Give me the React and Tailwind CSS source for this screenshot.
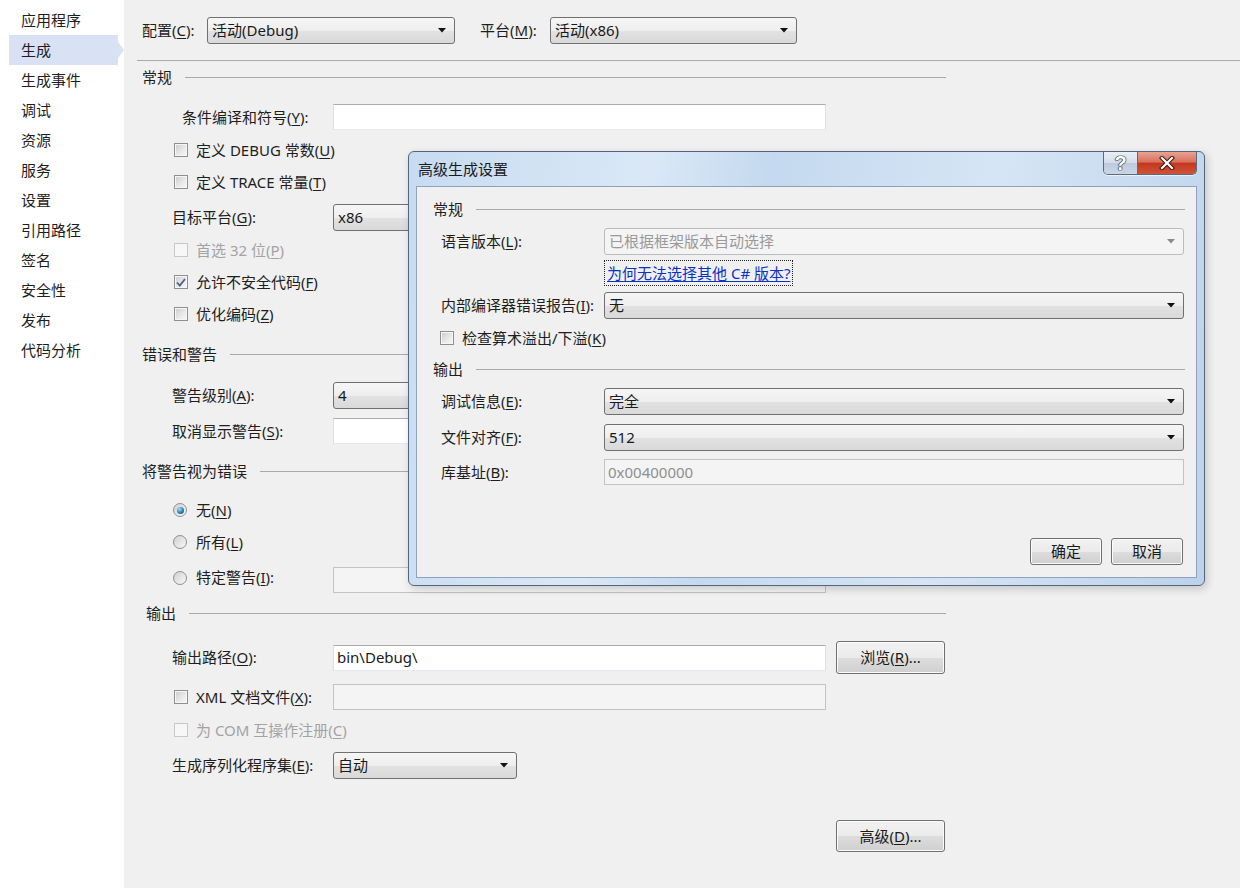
import React from 'react';

const U = ({ children }) => (
  <span className="underline underline-offset-[2px] decoration-1">{children}</span>
);

function Arrow({ disabled }) {
  return (
    <svg width="8" height="5" viewBox="0 0 8 5" className="shrink-0">
      <path d="M0 0H8L4 4.5Z" fill={disabled ? '#8a8a8a' : '#111'} />
    </svg>
  );
}

function Select({ value, className = '', disabled }) {
  return (
    <div
      className={`h-[27px] flex items-center justify-between pl-[4px] pr-[8px] rounded-[3px] border ${
        disabled
          ? 'border-[#b9bcc0] bg-[#f4f4f4] text-[#9a9a9a]'
          : 'border-[#707070] bg-[linear-gradient(to_bottom,#f6f6f6_0%,#eeeeee_50%,#e2e2e2_51%,#d9d9d9_100%)] text-[#1a1a1a]'
      } ${className}`}
    >
      <span>{value}</span>
      <Arrow disabled={disabled} />
    </div>
  );
}

function Input({ value, className = '', disabled }) {
  return (
    <div
      className={`h-[26px] flex items-center pl-[3px] border ${
        disabled
          ? 'border-[#c3c3c3] bg-[#f4f4f4] text-[#8f8f8f]'
          : 'border-[#abadb3] border-l-[#dbdfe6] border-r-[#dbdfe6] border-b-[#e3e9ef] bg-white text-[#1a1a1a]'
      } ${className}`}
    >
      {value}
    </div>
  );
}

function Button({ children, className = '' }) {
  return (
    <div
      className={`flex items-center justify-center rounded-[3px] border border-[#707070] bg-[linear-gradient(to_bottom,#f2f2f2_0%,#ebebeb_50%,#dddddd_51%,#cfcfcf_100%)] shadow-[inset_0_0_0_1px_#fbfbfb] text-[#1a1a1a] ${className}`}
    >
      {children}
    </div>
  );
}

function Check({ checked, disabled }) {
  return (
    <span
      className={`w-[14px] h-[14px] shrink-0 border flex items-center justify-center ${
        disabled
          ? 'border-[#c8c8c8] bg-[#f7f7f7]'
          : 'border-[#8e8f8f] bg-[linear-gradient(135deg,#cbcbcb_0%,#e8e8e8_55%,#f8f8f8_100%)] shadow-[inset_0_0_0_1px_#f6f6f6]'
      }`}
    >
      {checked && (
        <svg width="10" height="9" viewBox="0 0 10 9">
          <path d="M1 4.5L3.8 7.6L9 1" fill="none" stroke="#4a5f8d" strokeWidth="1.8" />
        </svg>
      )}
    </span>
  );
}

function Radio({ checked }) {
  return (
    <span className="w-[14px] h-[14px] shrink-0 rounded-full border border-[#8e8f8f] bg-[linear-gradient(135deg,#d0d0d0,#f8f8f8)] flex items-center justify-center">
      {checked && (
        <span className="w-[7px] h-[7px] rounded-full bg-[radial-gradient(circle_at_35%_30%,#a6defa_0%,#2a7fbc_55%,#0b4674_100%)]" />
      )}
    </span>
  );
}

function Section({ title, className = '' }) {
  return (
    <div className={`h-[26px] flex items-center ${className}`}>
      <span>{title}</span>
      <span className="flex-1 ml-[13px] h-0 border-t border-[#a9a9a9]" />
    </div>
  );
}

const sideItems = ['应用程序', '生成', '生成事件', '调试', '资源', '服务', '设置', '引用路径', '签名', '安全性', '发布', '代码分析'];

export default function App() {
  return (
    <div className="relative w-[1240px] h-[888px] overflow-hidden flex text-[15px] text-[#1e1e1e] font-['Noto_Sans','Noto_Sans_CJK_SC',sans-serif]">
      {/* Sidebar */}
      <div className="w-[124px] shrink-0 bg-white pt-[5px] flex flex-col">
        {sideItems.map((t) =>
          t === '生成' ? (
            <div key={t} className="h-[30px] flex items-center">
              <div className="ml-[9px] w-[109px] h-[30px] bg-[#d9e2f4] flex items-center pl-[12px]">{t}</div>
              <div className="w-0 h-0 border-y-[8px] border-y-transparent border-l-[6px] border-l-[#d9e2f4]" />
            </div>
          ) : (
            <div key={t} className="h-[30px] flex items-center pl-[21px]">
              {t}
            </div>
          )
        )}
      </div>

      {/* Main */}
      <div className="flex-1 bg-[#f0f0f0] flex flex-col">
        <div className="h-[60px] flex items-start pt-[17px] pl-[18px]">
          <span className="w-[65px] h-[27px] flex items-center">
            配置(<U>C</U>):
          </span>
          <Select value="活动(Debug)" className="w-[248px]" />
          <span className="ml-[25px] w-[70px] h-[27px] flex items-center">
            平台(<U>M</U>):
          </span>
          <Select value="活动(x86)" className="w-[247px]" />
        </div>
        <div className="ml-[13px] h-0 border-t border-[#a9a9a9]" />

        <div className="w-[822px] pl-[18px] flex flex-col">
          <Section title="常规" className="mt-[3px]" />

          <div className="mt-[14px] h-[26px] flex items-center pl-[40px]">
            <span className="w-[151px]">
              条件编译和符号(<U>Y</U>):
            </span>
            <Input value="" className="w-[493px]" />
          </div>

          <div className="mt-[7px] h-[26px] flex items-center pl-[32px] gap-[8px]">
            <Check />
            <span>
              定义 DEBUG 常数(<U>U</U>)
            </span>
          </div>
          <div className="mt-[6px] h-[26px] flex items-center pl-[32px] gap-[8px]">
            <Check />
            <span>
              定义 TRACE 常量(<U>T</U>)
            </span>
          </div>

          <div className="mt-[9px] h-[26px] flex items-center pl-[30px]">
            <span className="w-[161px]">
              目标平台(<U>G</U>):
            </span>
            <Select value="x86" className="w-[184px]" />
          </div>

          <div className="mt-[7px] h-[26px] flex items-center pl-[32px] gap-[8px] text-[#a3a3a3]">
            <Check disabled />
            <span>
              首选 32 位(<U>P</U>)
            </span>
          </div>
          <div className="mt-[6px] h-[26px] flex items-center pl-[32px] gap-[8px]">
            <Check checked />
            <span>
              允许不安全代码(<U>F</U>)
            </span>
          </div>
          <div className="mt-[6px] h-[26px] flex items-center pl-[32px] gap-[8px]">
            <Check />
            <span>
              优化编码(<U>Z</U>)
            </span>
          </div>

          <Section title="错误和警告" className="mt-[14px]" />

          <div className="mt-[15px] h-[26px] flex items-center pl-[30px]">
            <span className="w-[161px]">
              警告级别(<U>A</U>):
            </span>
            <Select value="4" className="w-[184px]" />
          </div>
          <div className="mt-[10px] h-[26px] flex items-center pl-[30px]">
            <span className="w-[161px]">
              取消显示警告(<U>S</U>):
            </span>
            <Input value="" className="w-[493px]" />
          </div>

          <Section title="将警告视为错误" className="mt-[14px]" />

          <div className="mt-[13px] h-[26px] flex items-center pl-[31px] gap-[9px]">
            <Radio checked />
            <span>
              无(<U>N</U>)
            </span>
          </div>
          <div className="mt-[6px] h-[26px] flex items-center pl-[31px] gap-[9px]">
            <Radio />
            <span>
              所有(<U>L</U>)
            </span>
          </div>
          <div className="mt-[12px] h-[26px] flex items-center pl-[31px]">
            <div className="w-[160px] flex items-center gap-[9px] -mt-[5px]">
              <Radio />
              <span>
                特定警告(<U>I</U>):
              </span>
            </div>
            <Input value="" disabled className="w-[493px]" />
          </div>

          <Section title="输出" className="mt-[7px] pl-[4px]" />

          <div className="mt-[15px] h-[33px] flex items-center pl-[30px]">
            <span className="w-[161px]">
              输出路径(<U>O</U>):
            </span>
            <Input value="bin\Debug\" className="w-[493px]" />
            <Button className="ml-[10px] w-[109px] h-[33px]">
              浏览(<U>R</U>)...
            </Button>
          </div>

          <div className="mt-[10px] h-[26px] flex items-center pl-[32px]">
            <div className="w-[159px] flex items-center gap-[8px]">
              <Check />
              <span>
                XML 文档文件(<U>X</U>):
              </span>
            </div>
            <Input value="" disabled className="w-[493px]" />
          </div>

          <div className="mt-[7px] h-[26px] flex items-center pl-[32px] gap-[8px] text-[#a3a3a3]">
            <Check disabled />
            <span>
              为 COM 互操作注册(<U>C</U>)
            </span>
          </div>

          <div className="mt-[9px] h-[27px] flex items-center pl-[30px]">
            <span className="w-[161px]">
              生成序列化程序集(<U>E</U>):
            </span>
            <Select value="自动" className="w-[184px]" />
          </div>

          <div className="mt-[41px] flex justify-end pr-[1px]">
            <Button className="w-[109px] h-[32px]">
              高级(<U>D</U>)...
            </Button>
          </div>
        </div>
      </div>

      {/* Dialog */}
      <div className="absolute left-[408px] top-[151px] w-[797px] h-[435px] rounded-[6px] border border-[#56657a] bg-[linear-gradient(100deg,#c7dbf1_0%,#dae8f6_28%,#c4d9ef_42%,#d6e5f5_68%,#bcd2eb_100%)] shadow-[2px_3px_8px_rgba(0,0,0,0.18)] flex flex-col px-[7px] pb-[7px]">
        <div className="h-[34px] flex items-start justify-between">
          <span className="self-center pl-[2px] text-[#1a1a1a]">高级生成设置</span>
          <div className="flex h-[23px] rounded-b-[5px] overflow-hidden border border-t-0 border-[#5d6a7e] shadow-[0_1px_0_rgba(255,255,255,0.6)]">
            <div className="w-[34px] h-full flex items-center justify-center border-r border-[#5d6a7e] bg-[linear-gradient(to_bottom,#e9eff6_0%,#d3dde9_50%,#bccbdc_51%,#c9d6e5_100%)]">
              <span className="font-['Liberation_Sans',sans-serif] font-bold text-[20px] leading-none text-white [text-shadow:0_0_1px_#2b2b2b,0_0_1px_#2b2b2b,0_0_1px_#2b2b2b,0_0_1px_#2b2b2b]">?</span>
            </div>
            <div className="w-[58px] h-full flex items-center justify-center bg-[linear-gradient(to_bottom,#e8a392_0%,#d9715d_45%,#c2381f_52%,#d0523a_100%)]">
              <svg width="16" height="14" viewBox="0 0 16 14">
                <path d="M3 2L13 12M13 2L3 12" stroke="#3a1512" strokeWidth="4.2" strokeLinecap="square" fill="none" />
                <path d="M3 2L13 12M13 2L3 12" stroke="#ffffff" strokeWidth="2.2" strokeLinecap="square" fill="none" />
              </svg>
            </div>
          </div>
        </div>

        <div className="flex-1 border border-[#8ea2bc] bg-[#f0f0f0] pl-[16px] pr-[11px] flex flex-col">
          <Section title="常规" className="mt-[9px]" />

          <div className="mt-[6px] h-[26px] flex items-center pl-[8px]">
            <span className="w-[163px]">
              语言版本(<U>L</U>):
            </span>
            <Select value="已根据框架版本自动选择" disabled className="w-[580px] h-[26px]" />
          </div>

          <div className="mt-[6px] h-[26px] flex items-center pl-[171px]">
            <span className="px-[2px] py-[1px] border border-dotted border-[#222] text-[#0a32c8] underline underline-offset-[2px]">
              为何无法选择其他 C# 版本?
            </span>
          </div>

          <div className="mt-[6px] h-[26px] flex items-center pl-[8px]">
            <span className="w-[163px]">
              内部编译器错误报告(<U>I</U>):
            </span>
            <Select value="无" className="w-[580px] h-[26px]" />
          </div>

          <div className="mt-[7px] h-[26px] flex items-center pl-[7px] gap-[8px]">
            <Check />
            <span>
              检查算术溢出/下溢(<U>K</U>)
            </span>
          </div>

          <Section title="输出" className="mt-[5px]" />

          <div className="mt-[6px] h-[26px] flex items-center pl-[8px]">
            <span className="w-[163px]">
              调试信息(<U>E</U>):
            </span>
            <Select value="完全" className="w-[580px] h-[26px]" />
          </div>
          <div className="mt-[10px] h-[26px] flex items-center pl-[8px]">
            <span className="w-[163px]">
              文件对齐(<U>F</U>):
            </span>
            <Select value="512" className="w-[580px] h-[26px]" />
          </div>
          <div className="mt-[9px] h-[26px] flex items-center pl-[8px]">
            <span className="w-[163px]">
              库基址(<U>B</U>):
            </span>
            <Input value="0x00400000" disabled className="w-[580px]" />
          </div>

          <div className="mt-[53px] flex justify-end gap-[9px] pr-[2px]">
            <Button className="w-[72px] h-[27px]">确定</Button>
            <Button className="w-[72px] h-[27px]">取消</Button>
          </div>
        </div>
      </div>
    </div>
  );
}
